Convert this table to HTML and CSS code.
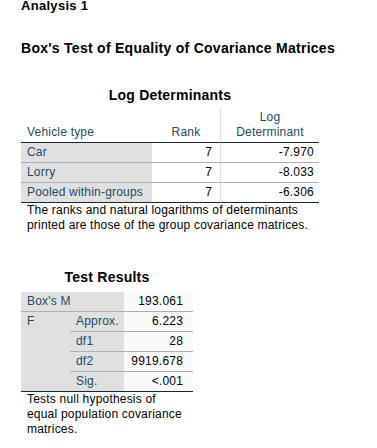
FILE: index.html
```html
<!DOCTYPE html>
<html lang="en">
<head>
<meta charset="utf-8">
<title>Analysis 1</title>
<link rel="stylesheet" href="styles.css">
</head>
<body>
<div class="page">
  <h1 class="title">Analysis 1</h1>
  <h2 class="subtitle">Box's Test of Equality of Covariance Matrices</h2>

  <table class="pivot logdet">
    <caption>Log Determinants</caption>
    <colgroup>
      <col class="c-label">
      <col class="c-rank">
      <col class="c-det">
    </colgroup>
    <thead>
      <tr>
        <th class="hd hd-left">Vehicle type</th>
        <th class="hd">Rank</th>
        <th class="hd sep">Log<br>Determinant</th>
      </tr>
    </thead>
    <tbody>
      <tr>
        <th class="lbl">Car</th>
        <td class="num rank">7</td>
        <td class="num det sep">-7.970</td>
      </tr>
      <tr>
        <th class="lbl">Lorry</th>
        <td class="num rank">7</td>
        <td class="num det sep">-8.033</td>
      </tr>
      <tr class="last">
        <th class="lbl">Pooled within-groups</th>
        <td class="num rank">7</td>
        <td class="num det sep">-6.306</td>
      </tr>
    </tbody>
  </table>
  <p class="note note-wide">The ranks and natural logarithms of determinants printed are those of the group covariance matrices.</p>

  <table class="pivot results">
    <caption>Test Results</caption>
    <colgroup>
      <col class="c-f">
      <col class="c-sub">
      <col class="c-val">
    </colgroup>
    <tbody>
      <tr>
        <th class="lbl" colspan="2">Box's M</th>
        <td class="num val">193.061</td>
      </tr>
      <tr>
        <th class="lbl group" rowspan="4">F</th>
        <th class="lbl">Approx.</th>
        <td class="num val">6.223</td>
      </tr>
      <tr>
        <th class="lbl">df1</th>
        <td class="num val">28</td>
      </tr>
      <tr>
        <th class="lbl">df2</th>
        <td class="num val">9919.678</td>
      </tr>
      <tr class="last">
        <th class="lbl">Sig.</th>
        <td class="num val">&lt;.001</td>
      </tr>
    </tbody>
  </table>
  <p class="note note-narrow">Tests null hypothesis of equal population covariance matrices.</p>
</div>
</body>
</html>
```

FILE: styles.css
```css
* {
  box-sizing: border-box;
}

body {
  margin: 0;
  background: #ffffff;
  font-family: "Liberation Sans", Arial, sans-serif;
  color: #010205;
}

.page {
  padding-left: 21px;
}

.title,
.subtitle {
  font-weight: bold;
  line-height: 15px;
  color: #000000;
}

.title {
  font-size: 13px;
  letter-spacing: 0.3px;
  margin: -2px 0 0;
}

.subtitle {
  font-size: 14px;
  letter-spacing: 0.27px;
  margin: 28px 0 0;
}

.pivot {
  border-collapse: separate;
  border-spacing: 0;
  table-layout: fixed;
  font-size: 12px;
  letter-spacing: 0.2px;
}

.pivot caption {
  font-size: 14px;
  font-weight: bold;
  letter-spacing: 0.22px;
  line-height: 15px;
  text-align: center;
  color: #000000;
}

.pivot th,
.pivot td {
  padding: 0;
  font-weight: normal;
  line-height: 19px;
  white-space: nowrap;
  border-bottom: 1px solid #aeaeae;
}

.pivot .last th,
.pivot .last td,
.pivot .group {
  border-bottom: 1px solid #152935;
}

/* Log Determinants */
.logdet {
  width: 298px;
  margin-top: 32px;
}

.logdet caption {
  padding-bottom: 5px;
}

.c-label { width: 131px; }
.c-rank { width: 68px; }
.c-det { width: 99px; }

.pivot .hd {
  color: #264a60;
  line-height: 15px;
  padding: 2px 0 2px;
  text-align: center;
  vertical-align: bottom;
  border-bottom: 1px solid #152935;
}

.pivot .hd-left {
  text-align: left;
  padding-left: 6px;
}

.pivot .sep {
  border-left: 1px solid #dcdcdc;
}

.pivot .lbl {
  background: #e0e0e0;
  color: #264a60;
  text-align: left;
  padding-left: 6px;
  vertical-align: top;
}

.pivot .num {
  text-align: right;
  color: #010205;
}

.pivot .rank {
  padding-right: 8px;
}

.pivot .det {
  padding-right: 5px;
}

/* Test Results */
.results {
  width: 172px;
  margin-top: 37px;
}

.results caption {
  padding-bottom: 7px;
}

.c-f { width: 49px; }
.c-sub { width: 54px; }
.c-val { width: 69px; }

.pivot .val {
  background: #fafafa;
  padding-right: 10px;
}

.note {
  margin: 0;
  font-size: 12px;
  letter-spacing: 0.2px;
  line-height: 15px;
  padding-left: 6px;
  color: #010205;
}

.note-wide {
  width: 298px;
}

.note-narrow {
  width: 172px;
  padding-right: 8px;
}
```
